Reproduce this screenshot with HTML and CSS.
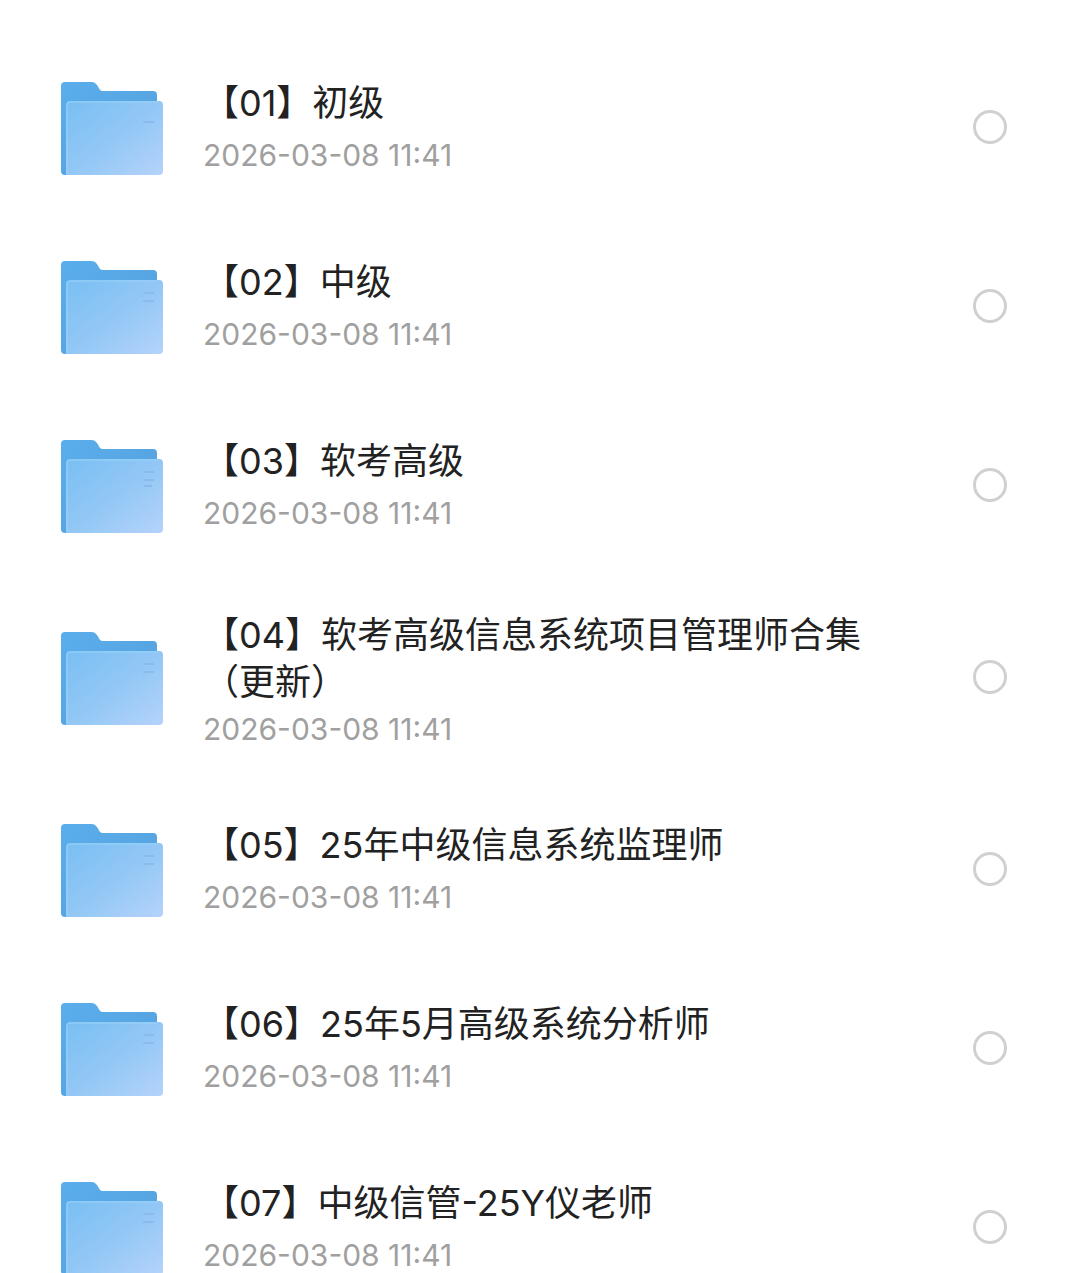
FILE: index.html
```html
<!DOCTYPE html>
<html lang="zh-CN">
<head>
    <meta charset="UTF-8">
    <meta name="viewport" content="width=device-width, initial-scale=1">
    <title>文件列表</title>
    <link rel="stylesheet" href="styles.css">
</head>
<body>

<!-- folder icon, shared by all rows -->
<svg class="icon-defs" width="0" height="0" aria-hidden="true">
    <defs>
        <linearGradient id="folder-back" x1="0" y1="0" x2="1" y2="1">
            <stop offset="0" stop-color="#5aaeec"/>
            <stop offset="1" stop-color="#549fdc"/>
        </linearGradient>
        <linearGradient id="folder-front" x1="0" y1="0" x2="1" y2="1">
            <stop offset="0" stop-color="#79bff3"/>
            <stop offset="0.5" stop-color="#92c7f5"/>
            <stop offset="1" stop-color="#b4d3fb"/>
        </linearGradient>
        <symbol id="folder" viewBox="0 0 102 93">
            <path fill="url(#folder-back)" d="M4 0h27q3 0 5 3l3 5q1 1 3 1h50q4 0 4 4v75H8v5H4q-4 0-4-4V4q0-4 4-4z"/>
            <path fill="url(#folder-front)" d="M9 19h89q4 0 4 4v66q0 4-4 4H5V23q0-4 4-4z"/>
            <path fill="none" stroke="#9ad3fa" stroke-width="1" d="M6 92V23q0-3 3-3h88"/>
        </symbol>
    </defs>
</svg>

<ul class="file-list">
    <li class="file-row">
        <svg class="folder-icon" viewBox="0 0 102 93" aria-hidden="true">
            <use href="#folder"/>
            <path class="folder-lines" d="M82 40h11"/>
        </svg>
        <label class="file-info" for="file-01">
            <span class="file-name">【01】初级</span>
            <span class="file-date">2026-03-08 11:41</span>
        </label>
        <input class="file-check" type="checkbox" id="file-01">
    </li>
    <li class="file-row">
        <svg class="folder-icon" viewBox="0 0 102 93" aria-hidden="true">
            <use href="#folder"/>
            <path class="folder-lines" d="M83 32h10M82 40h11"/>
        </svg>
        <label class="file-info" for="file-02">
            <span class="file-name">【02】中级</span>
            <span class="file-date">2026-03-08 11:41</span>
        </label>
        <input class="file-check" type="checkbox" id="file-02">
    </li>
    <li class="file-row">
        <svg class="folder-icon" viewBox="0 0 102 93" aria-hidden="true">
            <use href="#folder"/>
            <path class="folder-lines" d="M83 32h10M82 40h11M83 46h8"/>
        </svg>
        <label class="file-info" for="file-03">
            <span class="file-name">【03】软考高级</span>
            <span class="file-date">2026-03-08 11:41</span>
        </label>
        <input class="file-check" type="checkbox" id="file-03">
    </li>
    <li class="file-row">
        <svg class="folder-icon" viewBox="0 0 102 93" aria-hidden="true">
            <use href="#folder"/>
            <path class="folder-lines" d="M83 32h10M82 40h11"/>
        </svg>
        <label class="file-info file-info-long" for="file-04">
            <span class="file-name">【04】软考高级信息系统项目管理师合集（更新）</span>
            <span class="file-date">2026-03-08 11:41</span>
        </label>
        <input class="file-check" type="checkbox" id="file-04">
    </li>
    <li class="file-row">
        <svg class="folder-icon" viewBox="0 0 102 93" aria-hidden="true">
            <use href="#folder"/>
            <path class="folder-lines" d="M83 32h10M82 40h11"/>
        </svg>
        <label class="file-info" for="file-05">
            <span class="file-name">【05】25年中级信息系统监理师</span>
            <span class="file-date">2026-03-08 11:41</span>
        </label>
        <input class="file-check" type="checkbox" id="file-05">
    </li>
    <li class="file-row">
        <svg class="folder-icon" viewBox="0 0 102 93" aria-hidden="true">
            <use href="#folder"/>
            <path class="folder-lines" d="M83 32h10M82 40h11"/>
        </svg>
        <label class="file-info" for="file-06">
            <span class="file-name">【06】25年5月高级系统分析师</span>
            <span class="file-date">2026-03-08 11:41</span>
        </label>
        <input class="file-check" type="checkbox" id="file-06">
    </li>
    <li class="file-row">
        <svg class="folder-icon" viewBox="0 0 102 93" aria-hidden="true">
            <use href="#folder"/>
            <path class="folder-lines" d="M83 32h10M82 40h11"/>
        </svg>
        <label class="file-info" for="file-07">
            <span class="file-name">【07】中级信管-25Y仪老师</span>
            <span class="file-date">2026-03-08 11:41</span>
        </label>
        <input class="file-check" type="checkbox" id="file-07">
    </li>
</ul>

</body>
</html>
```
FILE: styles.css
```css
* {
    box-sizing: border-box;
}

body {
    margin: 0;
    background: #ffffff;
    font-family: Inter, "Noto Sans CJK SC", sans-serif;
}

.icon-defs {
    display: block;
}

.file-list {
    margin: 0;
    padding: 37px 71px 0 61px;
    list-style: none;
}

.file-row {
    display: flex;
    align-items: center;
    min-height: 179px;
    padding: 32px 0;
}

.folder-icon {
    flex: none;
    width: 102px;
    height: 93px;
    margin: 3px 40px 0 0;
}

.folder-lines {
    fill: none;
    stroke: #8bbbed;
    stroke-width: 2;
}

.file-info {
    flex: 1;
    display: flex;
    flex-direction: column;
    gap: 10px;
    margin-right: 80px;
    cursor: pointer;
}

.file-info-long {
    gap: 5px;
    padding-top: 6px;
}

.file-name {
    font-size: 36px;
    line-height: 47px;
    color: #222222;
}

.file-date {
    font-size: 30px;
    line-height: 36px;
    color: #a0a0a0;
}

.file-check {
    appearance: none;
    flex: none;
    width: 34px;
    height: 34px;
    margin: 0;
    border: 3px solid #d0d0d0;
    border-radius: 50%;
    background: #ffffff;
    cursor: pointer;
}

.file-check:checked {
    border: 10px solid #5aaeec;
}
```
